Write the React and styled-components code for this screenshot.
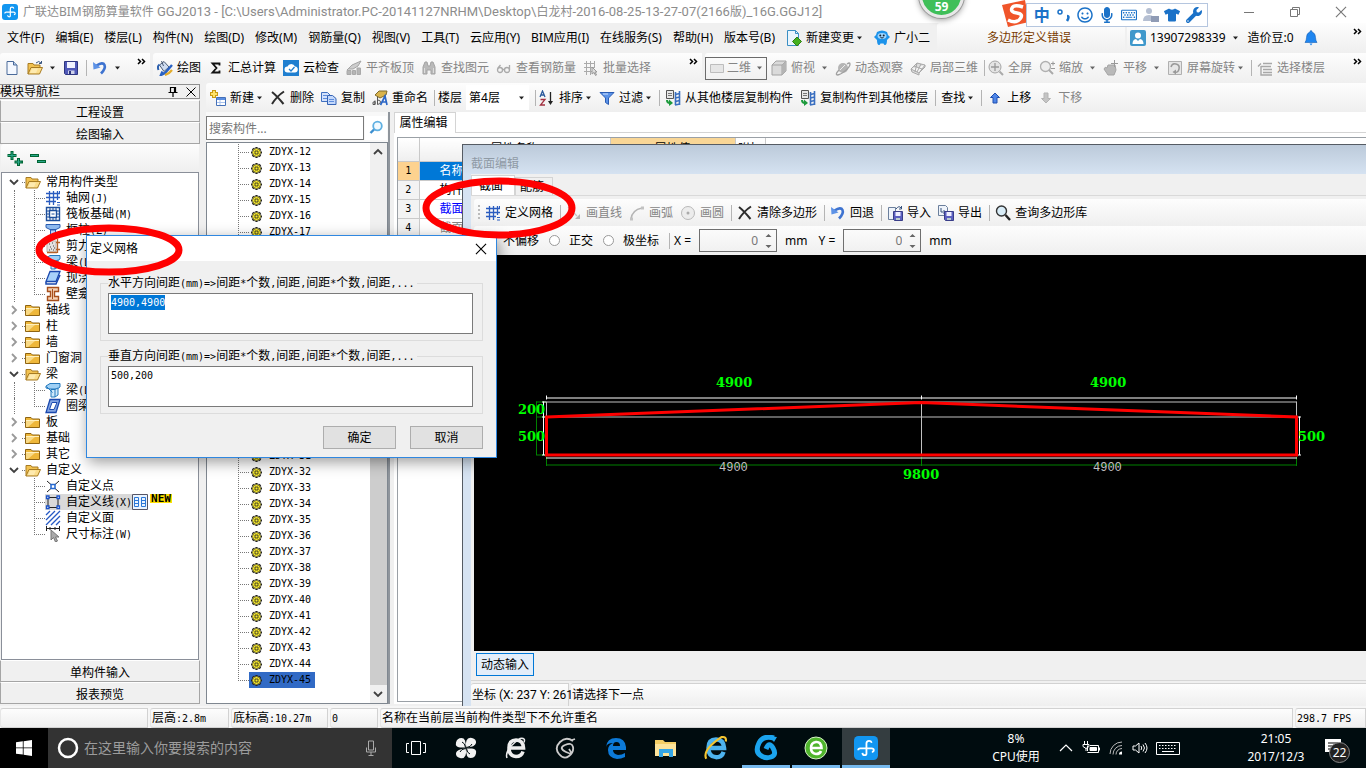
import React, { useEffect, useRef } from 'react';
import styled, { createGlobalStyle, css } from 'styled-components';
import { FaWrench, FaTshirt, FaMicrophone, FaRegKeyboard, FaRegSmile } from 'react-icons/fa';

const ui = '"Noto Sans", "Noto Sans CJK SC", sans-serif';
const mono = '"DejaVu Sans Mono", "Noto Sans CJK SC", monospace';

const GlobalStyle = createGlobalStyle`
  * { box-sizing: border-box; }
  body {
    margin: 0;
    font: 12px/16px ${ui};
    color: #000;
    background: #f0f0f0;
    overflow: hidden;
  }
  button, input, textarea, select { font: inherit; color: inherit; margin: 0; }
  button { padding: 0; border: 0; background: none; }
  a { color: inherit; text-decoration: none; }
  ul { list-style: none; margin: 0; padding: 0; }
  svg { display: block; flex: none; }
`;

/* ---------- icons ---------- */

const I = ({ children, s = 16, ...p }) => (
  <svg width={s} height={s} viewBox="0 0 16 16" fill="none" aria-hidden="true" {...p}>{children}</svg>
);

const Caret = ({ c = '#222' }) => (
  <svg width="7" height="4" viewBox="0 0 7 4" aria-hidden="true"><path d="M1 0.5h5L3.5 3.5z" fill={c} /></svg>
);

const Logo = ({ s = 16 }) => (
  <I s={s}>
    <rect width="16" height="16" rx="3" fill="#1296f0" />
    <path d="M8.300 12.200V5q0-1.800 1.700-1.800t1.600 1.400M8.300 8.200H4.200q-1.400 0-1.400 1.300M5.600 11.200q.2 1.600 1.500 1.600t1.200-1.200M6 8.200h5.700q1.500 0 1.500 1.200t-1.300 1.300" stroke="#fff" strokeWidth="1.200" />
  </I>
);
const NewDoc = () => (
  <I><path d="M3 1.500h6.500L13 5v9.500H3z" fill="#f4f8ff" stroke="#4a6a9a" /><path d="M9.500 1.500V5H13" fill="#b9cdea" stroke="#4a6a9a" /></I>
);
const OpenFolder = ({ arrow }) => (
  <I>
    <path d="M1 14V3.500h5l1 1.500h6v3" fill="#f2c251" stroke="#a77b22" />
    <path d="M1 14l3-6.500h11.500L12.500 14z" fill="#fbdd8b" stroke="#a77b22" />
    <path d="M3 13l2-4.500h6L9 13z" fill="#fff0bf" opacity=".7" />
    {arrow && <path d="M9 3q3-3 5 0M14.500 1v2.500H12" stroke="#36537f" />}
  </I>
);
const Folder = () => (
  <I>
    <path d="M.5 13.500v-10H6L7.500 5h7v8.500z" fill="#eeb73a" stroke="#8f6412" />
    <path d="M1 6.500h13" stroke="#fff0bd" /><path d="M1 7h9L3 13H1z" fill="#fbe29a" opacity=".8" />
  </I>
);
const Save = () => (
  <I><path d="M1.500 1.500h13v13h-12l-1-1z" fill="#5059b8" stroke="#2e3680" /><path d="M4 2h8v6H4z" fill="#f1f3ff" /><path d="M5 10.500h6.500V14H5z" fill="#cfd3ea" /><path d="M6 11h2v3H6z" fill="#2e3680" /></I>
);
const Undo = () => (
  <I><path d="M4.500 5.500q6.500-4 8-.5t-3.500 8.500" stroke="#3e73d0" strokeWidth="2.600" /><path d="M1 2l.5 7.500L8.500 7.500z" fill="#5d92e6" /></I>
);
const Paint = () => (
  <I><path d="M2.500 5L7 1.500l5 5.500-5 4.500z" fill="#cfdcf0" stroke="#4a5a75" /><path d="M2.500 4.500Q0 6 1.500 10" stroke="#2b5fae" strokeWidth="2" /><path d="M4.500 1l2 5" stroke="#4a5a75" /><path d="M15 5L8 13l-4 2 1.500-3.500" stroke="#2a62c4" strokeWidth="2.400" /><path d="M8 15q4-1 7-5" stroke="#e3ac2c" strokeWidth="2.200" /></I>
);
const Sigma = () => (
  <I><path d="M11.500 5.500V3.500h-7L8.500 8l-4 4.500h7v-2" stroke="#111" strokeWidth="1.800" /></I>
);
const Cloud = () => (
  <I><rect width="16" height="16" fill="#1f7fd0" /><path d="M4.500 12.500a3 3 0 0 1 0-6 4 4 0 0 1 7.500 0 3 3 0 0 1-.5 6z" fill="#fff" /><path d="M6 9l2 2 3.500-4" stroke="#1f7fd0" strokeWidth="1.300" /></I>
);
const AlignTop = () => (
  <I><path d="M1 10l5-5 9-4-3 5-5 3H2z" fill="#cdcdcd" stroke="#a5a5a5" /><path d="M1 10.500h4v4H1zM6.500 14.500v-4h3v4zM11 14.500V8h3.500v6.500z" fill="#b5b5b5" stroke="#a9a9a9" /></I>
);
const Binoculars = () => (
  <I><path d="M2 7l2-5h2l1 4h2l1-4h2l2 5v7h-4v-4H6v4H2z" fill="#b9b9b9" stroke="#a3a3a3" /><path d="M3.500 8v5M12.500 8v5" stroke="#ddd" /></I>
);
const Glasses = () => (
  <I><circle cx="4" cy="10" r="2.500" stroke="#aaa" strokeWidth="1.300" /><circle cx="11" cy="10" r="2.500" stroke="#aaa" strokeWidth="1.300" /><path d="M6.500 9.500h2M13.500 10V5M2 8l2.500-3" stroke="#aaa" strokeWidth="1.300" /></I>
);
const Batch = () => (
  <I><path d="M1 3.500h11M1 7.500h10M1 11.500h8M3.500 1v14M7.500 1v14M11.500 1v7" stroke="#aaa" /><path d="M9 7l5 5h-2l1.500 3-1 .5-1.500-3-2 1.500z" fill="#ddd" stroke="#999" /></I>
);
const Flat = () => (
  <I><path d="M1.500 4.500h13v8h-13z" fill="#e6e6e6" stroke="#bdbdbd" /></I>
);
const Cube = () => (
  <I><path d="M1 5h10v10H1zM1 5l4-4h10l-4 4M15 1v10l-4 4" fill="#dadada" stroke="#a2a2a2" /><path d="M11 5l4-4v10l-4 4z" fill="#b4b4b4" /></I>
);
const Orbit = () => (
  <I><circle cx="8" cy="8" r="5" fill="#b5b5b5" /><path d="M12 4q3-2 3 0 0 3-5 7t-8 4q-2-1 2-5" stroke="#a0a0a0" strokeWidth="1.300" /><path d="M5 10l5-5" stroke="#eee" /></I>
);
const Local3d = () => (
  <I><path d="M1 9l6-6 8 2-6 8zM4 6l8 3M7 3l-2 9M11 4l-4 8M1 9l1 3 7 3v-2l6-6V5" stroke="#a8a8a8" fill="#dedede" /></I>
);
const FullScreen = () => (
  <I><circle cx="7" cy="7" r="6" fill="#e4e4e4" stroke="#a6a6a6" /><path d="M7 3v8M3 7h8" stroke="#999" strokeWidth="1.300" /><path d="M11.500 11.500L15 15" stroke="#aaa" strokeWidth="2" /></I>
);
const ZoomIcon = () => (
  <I><circle cx="6.500" cy="6.500" r="5" fill="#eee" stroke="#b0b0b0" strokeWidth="1.300" /><path d="M10 10l4 4" stroke="#aaa" strokeWidth="2" /><path d="M12 3.500h4M14 1.500v4M12 8.500h4" stroke="#999" /></I>
);
const Pan = () => (
  <I><path d="M1 9q1-3 3-1l1-3h7l1 5-2 5H5z" fill="#b9b9b9" stroke="#a5a5a5" /><path d="M11.500 0v7M8 3.500h7" stroke="#999" /></I>
);
const Rotate = () => (
  <I><path d="M1.500 1.500h13v13h-13z" fill="#e6e6e6" stroke="#b0b0b0" /><path d="M4 7q1-4 5-3t3 5-4 3" stroke="#999" strokeWidth="1.500" /><path d="M9 9.500v5L5.500 12z" fill="#999" /></I>
);
const Floors = () => (
  <I><path d="M6 3.500h9M4 6.500h10M6 9.500h9M6 12.500h9M1 6.500l3-3M4 6v9h11" stroke="#a8a8a8" strokeWidth="1.400" /></I>
);
const NewItem = () => (
  <I><path d="M4 0v8M0 4h8" stroke="#c79a13" strokeWidth="4" /><path d="M4 1v6M1 4h6" stroke="#ffe36a" strokeWidth="2" /><path d="M6.500 7.500h9v8h-9z" fill="#fff" stroke="#4470b8" /><path d="M7 8h8v2H7z" fill="#5a8de0" /><path d="M7 12.500h8M10 10v5" stroke="#a9c3ee" /></I>
);
const Cross = () => (
  <I><path d="M2 2q5 4 11.500 12M14 1.500Q7 6 2 14" stroke="#2d2d2d" strokeWidth="2" /></I>
);
const Copy = () => (
  <I><path d="M.5 2.500h6l3 3v6h-9z" fill="#d4e2fc" stroke="#4070c0" /><path d="M6.500 5.500h5l3.500 3v6H6.500z" fill="#c3d8fb" stroke="#3563b5" /><path d="M8 9.500h5M8 11.500h5M2 5.500h4M2 8.500h4" stroke="#5e8ddd" /></I>
);
const Rename = () => (
  <I>
    <path d="M3 5l4-4h8l-1 4-6 3z" fill="#d9b44d" stroke="#7f6a2a" />
    <path d="M1 14.500q-1-3 2-3v3zM3 10.500v4M5.500 7v7.500q3-.5 3-2.500t-3-2" stroke="#555" /><path d="M8.500 15L13 6l2 9M10.500 12h4" stroke="#2c67c6" strokeWidth="1.700" />
  </I>
);
const Sort = () => (
  <I>
    <path d="M1 7l2.500-6L6 7M2 5h3" stroke="#2b5a9c" strokeWidth="1.300" /><path d="M1.500 9.500H6L1.500 15H6" stroke="#a33242" strokeWidth="1.300" />
    <path d="M11.500 2v11" stroke="#222" strokeWidth="1.300" /><path d="M9 11h5l-2.500 4z" fill="#222" />
  </I>
);
const Funnel = () => (
  <I><path d="M1 2.500h14L9.500 8v6.500l-3-2V8z" fill="#5b93e8" stroke="#2a5cb4" /><path d="M4 4h5" stroke="#cfe1ff" /></I>
);
const FloorCopy = () => (
  <I>
    <path d="M1.500.5h7v8h-7z" fill="#e8e8e8" stroke="#555" /><path d="M3 3.500h4M3 5.500h4" stroke="#777" />
    <path d="M10.500 2v13M14.500 1v14" stroke="#3a6fc0" strokeWidth="1.600" /><path d="M10 4.500l5-1M10 8l5-1M10 11.500l5-1M10 15l5-1" stroke="#3a6fc0" strokeWidth="1.400" />
    <path d="M2 10q0 3 3 3" stroke="#1d9a3c" strokeWidth="2" /><path d="M4 9.500l4 3.500-4 3z" fill="#1d9a3c" />
  </I>
);
const ArrowIcon = ({ down, off }) => (
  <I>
    <path d={down ? 'M8 13L3.500 8.500H6V3h4v5.500h2.500z' : 'M8 3l4.500 4.500H10V13H6V7.500H3.500z'} fill={off ? '#c4c4c4' : '#4f86e8'} stroke={off ? '#b3b3b3' : '#1f4fb0'} />
  </I>
);
const DocPlus = () => (
  <I><path d="M1.500.5h8l3 3v12h-11z" fill="#eaf5fd" stroke="#3a8fc4" /><path d="M9.500.5v3h3" stroke="#3a8fc4" /><path d="M11 7l4.500 4.500L11 16l-4.500-4.500z" fill="#44b01f" stroke="#2f7d13" /></I>
);
const Mascot = () => (
  <I>
    <path d="M3 2q5-3 10 0l1 3 2 2-2 2-1 1q0 5-2 5-1 0-1.500-1.500h-3Q6 15 5 15q-2 0-2-5L2 9 0 7l2-2z" fill="#1d93ea" /><ellipse cx="8" cy="6" rx="4.500" ry="3" fill="#9fd6ff" />
    <circle cx="6.300" cy="5.500" r="1" fill="#123" /><circle cx="9.700" cy="5.500" r="1" fill="#123" /><path d="M6.500 7.500q1.500 1 3 0" stroke="#123" />
  </I>
);
const User = () => (
  <I><rect width="16" height="16" rx="2" fill="#3f98cb" /><circle cx="8" cy="5.500" r="3" fill="#fff" /><path d="M2.500 14q0-4.500 3.500-5l2 2 2-2q3.500.5 3.500 5z" fill="#fff" /></I>
);
const Bell = () => (
  <I><path d="M8 .500q1 0 1 1.500 3.500 1 3.500 5.500 0 3 1.500 5H2q1.500-2 1.500-5Q3.500 3 7 2 7 .500 8 .500z" fill="#1f86f0" stroke="#155fb5" strokeWidth=".6" /><path d="M6.500 13.500h3L8 15.500z" fill="#1f86f0" /></I>
);
const Grid = () => (
  <I><path d="M1 3.500h14M1 7.500h14M1 11.500h10M4.500 1v14M8.500 1v14M12.500 1v9" stroke="#2a5cc0" strokeWidth="1.300" /><path d="M12 12.500h3M12 15h3M14.500 1v3" stroke="#2a5cc0" /></I>
);
const Raft = () => (
  <I><path d="M1.500 1.500h13v13h-13zM4.500 4.500h7v7h-7z" stroke="#1d4f9c" strokeWidth="1.400" /><path d="M1 5h3M1 8h3M1 11h3M12 5h3M12 8h3M12 11h3M5 1v3M8 1v3M11 1v3M5 12v3M8 12v3M11 12v3M6.500 8h3" stroke="#1d4f9c" /></I>
);
const Column = () => (
  <I><path d="M1 2.500h14v3l-4 2H5l-4-2z" fill="#8db9ee" stroke="#2a5cb0" /><path d="M5.500 8h5v7h-5z" fill="#bcd8fa" stroke="#2a5cb0" /></I>
);
const ShearWall = () => (
  <I><path d="M2 3h9v11H2z" fill="#e4e2e0" stroke="#bdb4ac" /><path d="M4 6h1M7 5h1M5 9h1M8 8h1M4 12h1M8 12h1M6 11h1M9 10h1" stroke="#444" /><path d="M2 14.500h10M12.500 1v14M11 4.500h4M11 11.500h4" stroke="#b5622a" strokeWidth="1.300" /></I>
);
const Beam = () => (
  <I><path d="M1 4l4-2.500h10V5l-3 2H5L1 6z" fill="#9fd0f5" stroke="#2378bd" /><path d="M6 7.500h4V15H6zM10 7.500l3-1.500v7l-3 2M1.500 4.500l6 6" fill="#cfe9fb" stroke="#2378bd" /></I>
);
const Slab = () => (
  <I><path d="M5 1.500h10l-4 10H1z" fill="#a8d2fa" stroke="#1b49ae" strokeWidth="1.300" /><path d="M1 12v2h10l4-9" stroke="#1b49ae" strokeWidth="1.500" /></I>
);
const RingBeam = () => (
  <I><path d="M5 1.500h10l-4 13H1z" fill="#84a6e2" stroke="#1b49ae" strokeWidth="1.300" /><path d="M7 4.500h5l-3 7H4.500z" fill="#fff" stroke="#1b49ae" /></I>
);
const Niche = () => (
  <I><path d="M2.500 1.500h11v4H9.500v5h4v4h-11v-4h3v-5h-3z" stroke="#a8501c" strokeWidth="1.400" fill="#f6d3b6" /><path d="M7.500 3v10" stroke="#a8501c" /></I>
);
const PointIcon = () => (
  <I><path d="M2 3l4.500 4M14 3L9.500 7M2 14l4.500-4M14 14l-4.500-4" stroke="#222" /><path d="M6 6.500h4v4H6z" fill="#fff" stroke="#2468d0" strokeWidth="1.500" /></I>
);
const LineIcon = () => (
  <I><path d="M3 3.500h10v10H3z" stroke="#222" /><path d="M1.500 2h2.500v2.500H1.500zM12 2h2.500v2.500H12zM1.500 12h2.500v2.500H1.500zM12 12h2.500v2.500H12z" fill="#fff" stroke="#1c53c8" strokeWidth="1.300" /></I>
);
const HatchIcon = () => (
  <I><path d="M1 5l4-4M1 10l9-9M1 15L15 1M6 15l9-9M11 15l4-4" stroke="#2458c4" strokeWidth="1.300" /></I>
);
const DimIcon = () => (
  <I><path d="M1.500 0v5M14.500 0v5M1 2.500h14M5 1v3M10 1v3" stroke="#222" /><path d="M6 4v10l2.500-2.500L10.500 16l2-1-2-4H14z" fill="#aaa" stroke="#777" /></I>
);
const TableIcon = () => (
  <I><path d="M.5.5h15v15H.5z" fill="#eaf4ff" stroke="#556" /><path d="M2.500 3.500h4v9h-4zM9.500 3.500h4v9h-4zM3 6.500h3.500M3 9.500h3.500M10 6.500h3.500M10 9.500h3.500" stroke="#2b78d8" /></I>
);
const Gear = () => (
  <svg width="11" height="11" viewBox="0 0 11 11" aria-hidden="true">
    <path d="M5.500 0v11M0 5.500h11M1.600 1.600l7.800 7.800M9.400 1.600L1.600 9.400" stroke="#222" strokeWidth="2.200" />
    <circle cx="5.500" cy="5.500" r="4" fill="#f7e92b" />
    <path d="M3.800.8v2M7.200.8v2M3.800 8.200v2M7.200 8.200v2M.8 3.800h2M.8 7.200h2M8.200 3.800h2M8.200 7.200h2" stroke="#222" strokeWidth=".8" />
    <path d="M4 4h3v3H4z" fill="none" stroke="#222" strokeWidth=".8" />
  </svg>
);
const Magnifier = ({ dark }) => (
  dark
    ? <I><circle cx="6.500" cy="6" r="5" fill="#d9edf8" stroke="#333" strokeWidth="1.400" /><path d="M10.500 10l4.500 5" stroke="#222" strokeWidth="2.400" /></I>
    : <I><circle cx="9.500" cy="6" r="4.300" fill="#f2faff" stroke="#5fb0e2" strokeWidth="1.800" /><path d="M6 9.500L2.500 13" stroke="#3c8fd0" strokeWidth="2.400" /></I>
);
const LineDraw = () => <I><path d="M2 2l9 9" stroke="#c4c4c4" strokeWidth="1.300" /><path d="M14 9v5H9z" fill="#b5b5b5" /></I>;
const ArcDraw = () => <I><path d="M2 14Q3 5 13 3" stroke="#b5b5b5" strokeWidth="1.400" /><path d="M1 12.500h3v3H1zM12 1.500h3v3h-3z" fill="#c2c2c2" /></I>;
const CircleDraw = () => <I><circle cx="8" cy="8" r="6.500" fill="#ececec" stroke="#b9b9b9" /><circle cx="8" cy="8" r="1.500" fill="#aaa" /></I>;
const Transfer = ({ out }) => (
  <I>
    <path d={out ? 'M.5.500h7l2 2v8h-9z' : 'M1.500 2.500h7v12h-7z'} fill="#eef3fa" stroke="#6b7f9c" />
    {out ? <path d="M3 3v4h4M5.500 5L7.500 7l-2 2" stroke="#36537f" /> : <path d="M9 4q3-4 5-1M14.500 1v3H12" stroke="#36537f" />}
    <path d="M6.500 6.500h9v9h-8l-1-1z" fill="#5b5fc0" stroke="#393d88" /><path d="M8.500 7h5v4h-5z" fill="#eef" /><path d="M9 13h4v2H9z" fill="#bcc" />
  </I>
);
const Pin = () => <I><path d="M5.500 3.500h5v5h-5zM3.500 8.500h9M8 9v4M9.500 4v4" stroke="#000" strokeWidth="1.200" /></I>;
const ThinX = ({ s = 16, c = '#000' }) => <I s={s}><path d="M3.500 3.500l9 9M12.500 3.500l-9 9" stroke={c} /></I>;
const ExpandAll = () => (
  <I><path d="M5 0v9M.5 4.500h9" stroke="#063" strokeWidth="3" /><path d="M5 1v7M1 4.500h8" stroke="#2aa78c" /><path d="M11.500 7v8M7.500 11h8.500" stroke="#063" strokeWidth="3" /><path d="M11.500 8v6M8.500 11h6" stroke="#2aa78c" /></I>
);
const CollapseAll = () => (
  <I><path d="M0 4.500h9M7 10.500h9" stroke="#063" strokeWidth="3" /><path d="M1 4.500h7M8 10.500h7" stroke="#2aa78c" /></I>
);
const Chevron = ({ dir }) => {
  const d = { right: 'M6 4l4 4-4 4', down: 'M4 6l4 4 4-4', up: 'M4 10l4-4 4 4' }[dir];
  return <I><path d={d} stroke={dir === 'right' ? '#999' : '#404040'} strokeWidth="1.800" /></I>;
};
const More = () => (
  <svg width="9" height="8" viewBox="0 0 9 8" aria-hidden="true"><path d="M1 1l2.500 2.500L1 6M5 1l2.500 2.500L5 6" fill="none" stroke="#000" strokeWidth="1.500" /></svg>
);

/* ---------- shared parts ---------- */

const Half = styled.span`
  font: 10px/16px ${mono};
`;

// half-width latin inside full-width chinese text
const Sim = ({ children }) => children.split(/([ -~]+)/).filter(Boolean).map((t, i) => (
  /[ -~]/.test(t) ? <Half key={i}>{t}</Half> : <React.Fragment key={i}>{t}</React.Fragment>
));

const Page = styled.div`
  position: relative;
  display: flex;
  flex-direction: column;
  height: 100vh;
  min-width: 1200px;
  overflow: hidden;
  white-space: nowrap;
`;

const strip = css`
  background: linear-gradient(#fdfdfd, #efefef);
  border-radius: 3px 0 0 3px;
`;

const ToolButton = styled.button`
  display: flex;
  align-items: center;
  gap: 4px;
  height: 24px;
  color: ${(p) => (p.$off ? '#858585' : '#000')};
`;

const CaretSlot = styled.span`
  display: flex;
  margin-left: ${(p) => (p.$wide ? 2 : -2)}px;
`;

const Sep = styled.span`
  width: 1px;
  height: 16px;
  margin: ${(p) => (p.$tight ? '0 -4px 0 -1px' : '0 -2px 0 0')};
  background: #b4b4b4;
`;

const Tool = ({ icon, label, off, drop, wide }) => (
  <ToolButton type="button" $off={off} aria-label={label ? undefined : 'tool'}>
    {icon}
    {label}
    {drop && <CaretSlot $wide={wide}><Caret c={off ? '#666' : '#222'} /></CaretSlot>}
  </ToolButton>
);

/* ---------- title bar ---------- */

const TitleBar = styled.header`
  display: flex;
  align-items: center;
  height: 23px;
  padding: 0 16px 0 2px;
  background: #fff;
  color: #8c8c8c;
  h1 { flex: 1; margin: 0 0 0 5px; font: inherit; }
  h1 span { font: 13px/16px Roboto, sans-serif; }
`;

const WinButtons = styled.div`
  display: flex;
  gap: 28px;
  button { width: 18px; height: 18px; display: grid; place-items: center; }
`;

const ImeBar = styled.div`
  position: absolute;
  top: 0;
  right: 158px;
  width: 207px;
  height: 28px;
  display: flex;
  align-items: center;
`;

const ImeIcons = styled.div`
  display: flex;
  align-items: center;
  justify-content: space-around;
  flex: 1;
  height: 24px;
  margin: 2px 0 0 -4px;
  padding: 0 2px 0 4px;
  border: 1px solid #b5c6df;
  background: #fff;
  color: #1b72c8;
  font-size: 16px;
  font-weight: 700;
`;

const Ball = styled.div`
  position: absolute;
  top: -27px;
  left: calc(50% + 236px);
  width: 45px;
  height: 45px;
  padding-top: 23px;
  border: 3px solid #e8e8e8;
  border-radius: 50%;
  background: #3fbf59;
  box-shadow: 0 0 0 1px #9a9a9a, 0 2px 6px rgba(0, 0, 0, 0.4);
  color: #fff;
  font-weight: 700;
  text-align: center;
`;

/* ---------- menu bar ---------- */

const MenuBar = styled.div`
  display: flex;
  flex: none;
  gap: 2px;
  height: 30px;
`;

const Menus = styled.nav`
  display: flex;
  align-items: center;
  gap: 11px;
  flex: 0 0 935px;
  padding-left: 7px;
`;

const Notice = styled.div`
  flex: 0 0 188px;
  display: grid;
  place-items: center;
  padding-right: 4px;
  color: #7a3c00;
  ${strip}
`;

const Account = styled.div`
  flex: 1;
  display: flex;
  align-items: center;
  gap: 9px;
  padding-left: 3px;
  ${strip}
  > :last-child { margin: -12px 4px 0 auto; }
`;

/* ---------- toolbars ---------- */

const Toolbars = styled.div`
  display: flex;
  flex: none;
  gap: 3px;
  height: 30px;
`;

const Segment = styled.div`
  display: flex;
  align-items: center;
  gap: 7px;
  flex: ${(p) => (p.$w ? `0 0 ${p.$w}px` : '1')};
  min-width: 0;
  padding: 0 4px;
  ${strip}
`;

const Push = styled.span`
  margin: -12px 0 0 auto;
`;

const ViewSelect = styled.label`
  display: flex;
  align-items: center;
  width: 62px;
  height: 23px;
  margin: 0 -3px 0 -4px;
  padding: 0 3px;
  border: 1px solid #6b6b6b;
  color: #858585;
  select { flex: 1; min-width: 0; margin-left: 2px; padding: 0; border: 0; background: none; appearance: none; }
`;

/* ---------- body ---------- */

const Body = styled.div`
  display: flex;
  flex: 1;
  min-height: 0;
`;

const NavPanel = styled.aside`
  display: flex;
  flex-direction: column;
  flex: 0 0 200px;
  padding-bottom: 2px;
`;

const NavTitle = styled.div`
  display: flex;
  align-items: center;
  gap: 2px;
  height: 15px;
  margin: 1px 0;
  border: 1px solid #8f8f8f;
  border-left: 0;
  h2 { flex: 1; margin: 0; font: inherit; }
`;

const NavButton = styled.button`
  height: 22px;
  flex: none;
  padding-top: 3px;
  border: 1px solid #a5a5a5;
  border-top-color: #fff;
  background: #f0f0f0;
`;

const NavTools = styled.div`
  display: flex;
  align-items: center;
  gap: 7px;
  height: 28px;
  margin: 0 1px;
  padding: 2px 6px 0;
  ${strip}
`;

const Tree = styled.ul`
  flex: 1;
  min-height: 0;
  margin: 0 1px;
  padding-top: 1px;
  overflow: hidden;
  border: 1px solid #8a8f99;
  background: #fff;
`;

const GroupRow = styled.div`
  display: flex;
  align-items: center;
  height: 16px;
  padding-left: 4px;
  button { width: 16px; height: 16px; }
  > span { margin-left: 5px; }
`;

const Dots = styled.i`
  width: 3px;
  height: 1px;
  border-top: 1px dotted #777;
`;

const Leaf = styled.li`
  display: flex;
  align-items: center;
  height: 16px;
  padding-left: 12px;
`;

const Rail = styled.i`
  width: 20px;
  height: 16px;
  border-left: 1px dotted ${(p) => (p.$on ? '#777' : 'transparent')};
`;

const Elbow = styled.i`
  flex: none;
  display: flex;
  width: 11px;
  height: 16px;
  background:
    repeating-linear-gradient(#777 0 1px, transparent 1px 2px) 0 0 / 1px ${(p) => (p.$last ? '8px' : '100%')} no-repeat,
    repeating-linear-gradient(90deg, #777 0 1px, transparent 1px 2px) 0 8px / 100% 1px no-repeat;
`;

const LeafLabel = styled.a`
  display: flex;
  align-items: center;
  height: 16px;
  > span { margin-left: 5px; }
  background: ${(p) => (p.$on ? '#d9d9d9' : 'none')};
`;

const NewTag = styled.b`
  align-self: flex-start;
  margin-left: 2px;
  padding: 0 1px;
  background: #ffe100;
  font: 700 11px/9px ${mono};
`;

/* ---------- work area ---------- */

const Work = styled.main`
  display: flex;
  flex-direction: column;
  flex: 1;
  min-width: 0;
  margin-left: 6px;
`;

const WorkTools = styled.div`
  display: flex;
  align-items: center;
  gap: 7px;
  flex: none;
  height: 29px;
  padding-left: 4px;
  ${strip}
`;

const FloorSelect = styled.label`
  display: flex;
  align-items: center;
  gap: 4px;
  span { display: flex; align-items: center; width: 63px; height: 25px; padding: 0 4px 0 3px; background: #fff; }
  select { flex: 1; min-width: 0; padding: 0; border: 0; background: none; appearance: none; }
`;

const Panes = styled.div`
  display: flex;
  flex: 1;
  gap: 4px;
  min-height: 0;
  padding-bottom: 2px;
`;

const ListPane = styled.section`
  display: flex;
  flex-direction: column;
  flex: 0 0 184px;
  padding-top: 4px;
  border-right: 2px solid #8f959c;
  background: #f8f8f8;
`;

const Search = styled.div`
  display: flex;
  gap: 1px;
  height: 25px;
  margin-bottom: 1px;
  input {
    width: 158px;
    height: 24px;
    padding: 0 2px;
    border: 1px solid #7a7a7a;
    border-radius: 0;
    background: #fff;
  }
  input::placeholder { color: #777; opacity: 1; }
  button { width: 22px; height: 24px; display: grid; place-items: center; background: #fff; }
`;

const ListBox = styled.div`
  display: flex;
  flex: 1;
  min-height: 0;
  border: 1px solid #7f8790;
  background: #fff;
  overflow: hidden;
  ul { flex: 1; padding: 1px 0 0 31px; }
`;

const ItemRow = styled.li`
  display: flex;
  align-items: center;
  height: 16px;
  a {
    display: flex;
    align-items: center;
    gap: 7px;
    height: 16px;
    padding: 0 4px 0 2px;
    font: 10px/16px ${mono};
    background: ${(p) => (p.$on ? '#316ac5' : 'none')};
  }
`;

const ScrollBar = styled.div`
  display: flex;
  flex-direction: column;
  width: 17px;
  background: #f0f0f0;
  button { height: 18px; flex: none; }
`;

const Thumb = styled.div`
  flex: 1;
  margin-top: 236px;
  background: #cdcdcd;
`;

const PropPane = styled.section`
  display: flex;
  flex-direction: column;
  flex: 1;
  min-width: 0;
  background: #fff;
`;

const PropTab = styled.div`
  display: flex;
  height: 21px;
  button { width: 62px; padding-right: 3px; border: 1px solid #d4d4d4; border-bottom: 0; background: #fff; }
  &::after { content: ''; flex: 1; border-bottom: 1px solid #d4d4d4; }
`;

const PropBox = styled.div`
  flex: 1;
  margin: 4px 0 2px 3px;
  border: 1px solid #9aa0a6;
  border-right: 0;
`;

const PropTable = styled.table`
  border-collapse: collapse;
  table-layout: fixed;
  width: 367px;
  th, td { height: 19px; padding: 0; border: 1px solid #c9c9c9; border-width: 0 1px 1px 0; font-weight: 400; overflow: hidden; }
  thead th { height: 23px; background: linear-gradient(#fff, #efefef); }
  tbody th { background: #f3f3f3; font: 10px/16px ${mono}; }
  td:nth-child(2) { padding-left: 20px; }
`;

const HotHead = styled.th`
  && { background: #f9d696; }
`;

const PropRow = styled.tr`
  color: ${(p) => p.$color};
  td { background: ${(p) => p.$bg || '#fff'}; }
  && th { color: #000; background: ${(p) => (p.$bg ? '#fdd28f' : '#f3f3f3')}; }
`;

/* ---------- section editor window ---------- */

const EditorWindow = styled.section`
  position: absolute;
  top: 144px;
  right: 0;
  bottom: 62px;
  left: 462px;
  display: flex;
  flex-direction: column;
  border: 1px solid #555b63;
  border-width: 1px 0 0 1px;
  padding-left: 8px;
  background: linear-gradient(#bccada, #d6e3f2 30px);
`;

const EditorTitle = styled.h2`
  flex: 0 0 29px;
  margin: 0;
  padding-top: 11px;
  font: inherit;
  color: #8f9aa5;
`;

const EditorBody = styled.div`
  display: flex;
  flex: 1;
  flex-direction: column;
  min-height: 0;
  background: #f0f0f0;
`;

const EditorTabs = styled.div`
  display: flex;
  align-items: flex-end;
  height: 22px;
  margin-bottom: 3px;
  border-bottom: 1px solid #d9d9d9;
`;

const EditorTab = styled.button`
  width: ${(p) => (p.$on ? 44 : 38)}px;
  height: ${(p) => (p.$on ? 20 : 18)}px;
  padding-right: 4px;
  border: 1px solid #d4d4d4;
  border-bottom: 0;
  background: ${(p) => (p.$on ? '#fff' : '#f0f0f0')};
`;

const EditorTools = styled.div`
  display: flex;
  align-items: center;
  gap: 7px;
  flex: 0 0 27px;
  margin-left: 3px;
  padding-left: 4px;
  ${strip}
`;

const Grip = styled.i`
  width: 2px;
  height: 15px;
  margin-right: -2px;
  background: repeating-linear-gradient(#bbb 0 2px, transparent 2px 4px);
`;

const Options = styled.div`
  display: flex;
  align-items: center;
  flex: 0 0 29px;
  margin-left: 3px;
  padding-left: 9px;
  ${strip}
`;

const Radio = styled.label`
  display: flex;
  align-items: center;
  gap: 9px;
  margin-right: 10px;
  input {
    appearance: none;
    width: 11px;
    height: 11px;
    margin: 0;
    border: 1px solid #999;
    border-radius: 50%;
    background: #fff;
  }
`;

const NumberField = styled.label`
  display: flex;
  align-items: center;
  gap: 8px;
  margin-left: ${(p) => (p.$first ? 6 : 11)}px;
`;

const Spin = styled.span`
  display: flex;
  width: 78px;
  height: 23px;
  border: 1px solid #6f6f6f;
  color: #777;
  input { flex: 1; min-width: 0; padding: 0 3px; border: 0; background: none; text-align: right; }
  svg { margin: 3px 4px; }
`;

const Canvas = styled.div`
  flex: 1;
  min-height: 0;
  margin-left: 3px;
  background: #000;
  svg { width: 100%; height: 100%; }
`;

const InputRow = styled.div`
  flex: 0 0 30px;
  padding: 2px 0 0 5px;
  border-bottom: 1px solid #d6d6d6;
  button { width: 58px; height: 23px; border: 1px solid #0078d7; background: #e3eefa; }
`;

const EditorStatus = styled.div`
  display: flex;
  flex: 0 0 24px;
  padding-top: 2px;
  gap: 2px;
  font-family: Roboto, "Noto Sans CJK SC", sans-serif;
  span { padding: 3px 1px; border-top: 1px solid #d2d2d2; ${strip} }
  span:first-child { width: 98px; border-right: 1px solid #d2d2d2; }
  span:last-child { flex: 1; }
`;

/* ---------- dialog ---------- */

const Dialog = styled.form`
  position: absolute;
  top: 235px;
  left: 86px;
  width: 411px;
  height: 223px;
  border: 1px solid #2f87e0;
  background: #f0f0f0;
  box-shadow: 2px 4px 14px rgba(0, 0, 0, 0.4);
`;

const DialogTitle = styled.div`
  display: flex;
  align-items: center;
  justify-content: space-between;
  height: 25px;
  margin-bottom: 14px;
  padding: 0 6px 0 3px;
  background: #fff;
  h2 { margin: 0; font: inherit; }
`;

const Group = styled.fieldset`
  height: 66px;
  margin: 0 13px 7px;
  padding: 2px 8px 0 7px;
  border: 1px solid #dcdcdc;
  legend { padding: 0 3px 0 0; height: 16px; }
  textarea {
    display: block;
    width: 365px;
    height: 41px;
    padding: 1px 2px;
    border: 1px solid #7a7a7a;
    border-radius: 0;
    outline: 0;
    resize: none;
    font: 10px/15px ${mono};
  }
  textarea::selection { background: #0078d7; color: #fff; }
`;

const DialogButtons = styled.div`
  display: flex;
  justify-content: flex-end;
  gap: 14px;
  padding: 5px 13px 0 0;
  button { width: 73px; height: 23px; border: 1px solid #adadad; background: #e1e1e1; }
`;

const Marks = styled.svg`
  position: absolute;
  top: 0;
  left: 0;
  pointer-events: none;
`;

/* ---------- status bar and task bar ---------- */

const StatusBar = styled.footer`
  display: flex;
  flex: none;
  gap: 2px;
  height: 22px;
  padding-top: 2px;
  background: #f6f6f6;
`;

const StatusCell = styled.span`
  flex: ${(p) => (p.$w ? `0 0 ${p.$w}px` : '1')};
  padding: 1px 0 0 1px;
  border: 1px solid #d2d2d2;
  border-left-color: #e6e6e6;
  ${strip}
`;

const TaskBar = styled.footer`
  display: flex;
  align-items: stretch;
  flex: none;
  height: 40px;
  background: #000c0f;
  color: #fff;
`;

const Start = styled.button`
  display: grid;
  place-items: center;
  width: 48px;
  background: #000;
`;

const TaskSearch = styled.label`
  display: flex;
  align-items: center;
  gap: 5px;
  width: 344px;
  padding: 0 13px 0 9px;
  background: #333;
  input { flex: 1; min-width: 0; padding: 0; border: 0; background: none; font-size: 14px; }
  input::placeholder { color: #9c9c9c; opacity: 1; }
`;

const Apps = styled.div`
  display: flex;
  flex: 1;
  gap: 2px;
`;

const AppButton = styled.button`
  display: grid;
  place-items: center;
  width: 48px;
  border-bottom: 3px solid ${(p) => (p.$run ? '#76b9ed' : 'transparent')};
  padding-top: 3px;
  background: ${(p) => (p.$on ? '#343d40' : 'none')};
  background-clip: padding-box;
`;

const TwoLine = styled.div`
  display: flex;
  flex-direction: column;
  justify-content: center;
  width: ${(p) => p.$w}px;
  text-align: center;
  line-height: 18px;
`;

const Tray = styled.div`
  display: flex;
  align-items: center;
  gap: 8px;
  width: 173px;
`;

const Action = styled.button`
  position: relative;
  display: flex;
  align-items: center;
  width: 45px;
  padding-left: 4px;
  color: #fff;
  span {
    position: absolute;
    right: 16px;
    bottom: 5px;
    width: 21px;
    height: 21px;
    border: 1px solid #888;
    border-radius: 50%;
    background: #222;
    line-height: 19px;
  }
`;

/* ---------- data ---------- */

const menus = ['文件(F)', '编辑(E)', '楼层(L)', '构件(N)', '绘图(D)', '修改(M)', '钢筋量(Q)', '视图(V)', '工具(T)', '云应用(Y)', 'BIM应用(I)', '在线服务(S)', '帮助(H)', '版本号(B)'];

const tree = [
  { name: '常用构件类型', kids: [
    ['轴网(J)', <Grid />], ['筏板基础(M)', <Raft />], ['框柱(Z)', <Column />], ['剪力墙(Q)', <ShearWall />],
    ['梁(L)', <Beam />], ['现浇板(B)', <Slab />], ['壁龛', <Niche />],
  ] },
  { name: '轴线' }, { name: '柱' }, { name: '墙' }, { name: '门窗洞' },
  { name: '梁', kids: [['梁(L)', <Beam />], ['圈梁(E)', <RingBeam />]] },
  { name: '板' }, { name: '基础' }, { name: '其它' },
  { name: '自定义', kids: [['自定义点', <PointIcon />], ['自定义线(X)', <LineIcon />, true], ['自定义面', <HatchIcon />], ['尺寸标注(W)', <DimIcon />]] },
];

const items = Array.from({ length: 34 }, (_, i) => `ZDYX-${i + 12}`);

const props = [
  ['名称', '#fff', '#0078d7'],
  ['构件类型', '#000'],
  ['截面形状', '#00f'],
  ['截面宽度', '#858585'],
];

/* ---------- views ---------- */

const ModuleNav = () => (
  <NavPanel>
    <NavTitle><h2>模块导航栏</h2><Pin /><ThinX /></NavTitle>
    <NavButton type="button">工程设置</NavButton>
    <NavButton type="button">绘图输入</NavButton>
    <NavTools><ExpandAll /><CollapseAll /></NavTools>
    <Tree>
      {tree.map((g, gi) => (
        <li key={gi}>
          <GroupRow>
            <button type="button" aria-label={g.name}><Chevron dir={g.kids ? 'down' : 'right'} /></button>
            <Dots />
            {g.kids ? <OpenFolder /> : <Folder />}
            <span>{g.name}</span>
          </GroupRow>
          {g.kids && (
            <ul>
              {g.kids.map(([name, icon, on], i) => (
                <Leaf key={name}>
                  <Rail $on={gi < tree.length - 1} />
                  <Elbow $last={i === g.kids.length - 1} />
                  <LeafLabel href="#" $on={on}>{icon}<span><Sim>{name}</Sim></span></LeafLabel>
                  {on && <><TableIcon /><NewTag>NEW</NewTag></>}
                </Leaf>
              ))}
            </ul>
          )}
        </li>
      ))}
    </Tree>
    <NavButton type="button">单构件输入</NavButton>
    <NavButton type="button">报表预览</NavButton>
  </NavPanel>
);

const ComponentList = () => (
  <ListPane>
    <Search>
      <input aria-label="搜索构件" placeholder="搜索构件..." />
      <button type="button" aria-label="搜索"><Magnifier /></button>
    </Search>
    <ListBox>
      <ul>
        {items.map((name, i) => (
          <ItemRow key={name} $on={i === items.length - 1}>
            <Elbow $last={i === items.length - 1} />
            <a href="#"><Gear />{name}</a>
          </ItemRow>
        ))}
      </ul>
      <ScrollBar>
        <button type="button" aria-label="上"><Chevron dir="up" /></button>
        <Thumb />
        <button type="button" aria-label="下"><Chevron dir="down" /></button>
      </ScrollBar>
    </ListBox>
  </ListPane>
);

const Properties = () => (
  <PropPane>
    <PropTab><button type="button">属性编辑</button></PropTab>
    <PropBox>
      <PropTable>
        <colgroup><col width="21" /><col width="191" /><col width="125" /><col width="30" /></colgroup>
        <thead><tr><th /><th>属性名称</th><HotHead>属性值</HotHead><th>附加</th></tr></thead>
        <tbody>
          {props.map(([name, color, bg], i) => (
            <PropRow key={name} $color={color} $bg={bg}><th>{i + 1}</th><td>{name}</td><td /><td /></PropRow>
          ))}
        </tbody>
      </PropTable>
    </PropBox>
  </PropPane>
);

const Drawing = () => (
  <svg viewBox="474 255 892 397" preserveAspectRatio="xMidYMid slice" fill="none">
    <g stroke="#c0c0c0">
      <path d="M546.500 402.500H1296.500M546.500 417.500H1296.500M546.500 402V456M1296.500 402V456M921.500 402V456" />
    </g>
    <path d="M536.500 402V455.500M536 402.500h10M536 417.500h10M536 455.500h10M546.500 457v9.500M546 465.500H1297M921.500 457v9.500M1296.500 457v9.500" stroke="#008000" />
    <path d="M546 398.500H1297M546.500 396v4M921.500 396v4M1296.500 396v4M546 458.500H1297M543.500 402V455.500M542 402.500h4M542 417.500h4M542 455.500h4M1299.500 417V455.500M1297 417.500h4M1297 455.500h4" stroke="#fff" />
    <g fill="#00ff00" fontFamily="DejaVu Serif, serif" fontWeight="700" fontSize="13">
      <text x="716" y="387">4900</text>
      <text x="1090" y="387">4900</text>
      <text x="518" y="414">200</text>
      <text x="518" y="441">500</text>
      <text x="1298" y="441">500</text>
      <text x="903" y="479">9800</text>
    </g>
    <g fill="#c0c0c0" fontFamily="Liberation Mono, monospace" fontSize="12">
      <text x="719" y="471">4900</text>
      <text x="1093" y="471">4900</text>
    </g>
    <path d="M546.500 417.500L921 403L1296.500 417.500V455.500H546.500Z" stroke="#f00" strokeWidth="3" />
  </svg>
);

const SpinBox = ({ name, first }) => (
  <NumberField $first={first}>
    {name} =
    <Spin>
      <input defaultValue="0" inputMode="numeric" />
      <svg width="7" height="16" viewBox="0 0 7 16"><path d="M.500 4h6l-3-3zM.500 12h6l-3 3z" fill="#666" /></svg>
    </Spin>
    mm
  </NumberField>
);

const SectionEditor = () => (
  <EditorWindow>
    <EditorTitle>截面编辑</EditorTitle>
    <EditorBody>
      <EditorTabs><EditorTab type="button" $on>截面</EditorTab><EditorTab type="button">配筋</EditorTab></EditorTabs>
      <EditorTools>
        <Grip />
        <Tool icon={<Grid />} label="定义网格" /><Sep />
        <Tool icon={<LineDraw />} label="画直线" off />
        <Tool icon={<ArcDraw />} label="画弧" off />
        <Tool icon={<CircleDraw />} label="画圆" off /><Sep />
        <Tool icon={<Cross />} label="清除多边形" /><Sep />
        <Tool icon={<Undo />} label="回退" /><Sep />
        <Tool icon={<Transfer />} label="导入" />
        <Tool icon={<Transfer out />} label="导出" /><Sep />
        <Tool icon={<Magnifier dark />} label="查询多边形库" />
      </EditorTools>
      <Options>
        {['不偏移', '正交', '极坐标'].map((t) => (
          <Radio key={t}><input type="radio" name="offset" />{t}</Radio>
        ))}
        <Sep />
        <SpinBox name="X" first />
        <SpinBox name="Y" />
      </Options>
      <Canvas><Drawing /></Canvas>
      <InputRow><button type="button">动态输入</button></InputRow>
      <EditorStatus><span>坐标 (X: 237 Y: 261</span><span>请选择下一点</span></EditorStatus>
    </EditorBody>
  </EditorWindow>
);

const GridDialog = () => {
  const first = useRef(null);
  useEffect(() => {
    first.current.focus();
    first.current.select();
  }, []);
  return (
    <Dialog onSubmit={(e) => e.preventDefault()}>
      <DialogTitle><h2>定义网格</h2><button type="button" aria-label="关闭"><ThinX s={18} /></button></DialogTitle>
      <Group>
        <legend><label htmlFor="hgap"><Sim>水平方向间距(mm)=&gt;间距*个数,间距,间距*个数,间距,...</Sim></label></legend>
        <textarea id="hgap" ref={first} spellCheck="false" defaultValue="4900,4900" />
      </Group>
      <Group>
        <legend><label htmlFor="vgap"><Sim>垂直方向间距(mm)=&gt;间距*个数,间距,间距*个数,间距,...</Sim></label></legend>
        <textarea id="vgap" spellCheck="false" defaultValue="500,200" />
      </Group>
      <DialogButtons><button type="submit">确定</button><button type="button">取消</button></DialogButtons>
    </Dialog>
  );
};

const apps = [
  { n: '任务视图', i: <svg width="20" height="16" fill="none" stroke="#fff"><path d="M5.500 1.500h9v13h-9zM3 3.500H.500v9H3M17 3.500h2.500v9H17" /></svg> },
  { n: '浏览器', i: <svg width="24" height="24" viewBox="0 0 24 24" fill="#f2f2f2"><path d="M11.500 11.500H6Q1 11 2 6.500T7.500 2q5 0 4 9.500zM12.500 11.500Q11 8 12.500 4.500T18 2q4.500 1 4 5-1 4-9.500 4.500zM12.500 12.500H18q5 .5 4 5T16.500 22q-5 0-4-9.500zM11.500 12.500q1.500 3.500 0 7T6 22q-4.500-1-4-5 1-4 9.500-4.500z" /><path d="M8 6q3 1 3.500 5.500M18 8q-1 3-5.500 3.500M16 18q-3-1-3.500-5.500M6 16q1-3 5.500-3.500" stroke="#000c0f" fill="none" /></svg> },
  { n: 'IE', i: <svg width="24" height="24" viewBox="0 0 24 24" fill="none" stroke="#eee"><path d="M19 15.500q-1.500 5-7 5-7-.5-7-8.500t7-8 7.500 8H6" strokeWidth="3.600" /><path d="M3 22q-3-8 13-19.500 6-1 4 4" strokeWidth="1.500" /></svg> },
  { n: '螺旋', i: <svg width="22" height="22" viewBox="0 0 22 22" fill="none" stroke="#ccc" strokeWidth="1.800"><path d="M18 4Q11-1 5 5t-1 12 10 2 4-9-8-2 1 7 3-3M17 3l3-1" /></svg> },
  { n: 'Edge', i: <svg width="22" height="22" viewBox="0 0 22 22" fill="#0c7ad8"><path d="M1 10Q2 1 11 1t10 9v3H8q0 4 5 5 4 0 7-2v4q-4 2-8 2-9-1-9-9 0-5 5-7-6 0-7 4zm7-1h7q0-4-3.500-4T8 9z" /></svg> },
  { n: '文件', i: <svg width="24" height="20" viewBox="0 0 24 20"><path d="M1 2h8l2 2h11v14H1z" fill="#f5cf67" /><path d="M1 6h21v12H1z" fill="#fde49b" /><path d="M5 19v-8h14v8h-4v-4H9v4z" fill="#35a6e6" /></svg> },
  { n: 'Internet Explorer', i: <svg width="26" height="26" viewBox="0 0 24 24" fill="none"><path d="M19 15.500q-1.500 5-7 5-7-.5-7-8.500t7-8 7.500 8H6" stroke="#4db3ee" strokeWidth="4" /><path d="M3 22q-4-8 14-20 5-1 4 4" stroke="#f4c531" strokeWidth="2" /></svg> },
  { n: 'G', run: true, i: <svg width="24" height="26" viewBox="0 0 24 26" fill="none"><path d="M20 3Q9 0 5 8t1 12 11 2 2-9-7 1" stroke="#1ba4ee" strokeWidth="5" /><path d="M15 1l8 1-3 5z" fill="#1ba4ee" /></svg> },
  { n: '360', run: true, i: <svg width="24" height="24" viewBox="0 0 24 24" fill="none"><circle cx="12" cy="12" r="11" fill="#4fb42c" stroke="#d6f0c8" /><path d="M17 15q-1 3-5 3-5-.5-5-6t5-6 5.500 6H8" stroke="#fff" strokeWidth="2.600" /></svg> },
  { n: '广联达', run: true, on: true, i: <Logo s={24} /> },
];

export default function App() {
  return (
    <Page>
      <GlobalStyle />
      <TitleBar>
        <Logo />
        <h1>广联达BIM钢筋算量软件<span> GGJ2013 - [C:\Users\Administrator.PC-20141127NRHM\Desktop\</span>白龙村<span>-2016-08-25-13-27-07(2166</span>版<span>)_16G.GGJ12]</span></h1>
        <WinButtons>
          <button type="button" aria-label="最小化"><I><path d="M3 8.500h10" stroke="#777" /></I></button>
          <button type="button" aria-label="还原"><I><path d="M3.500 5.500h7v7h-7zM5.500 5V3.500h7v7H11" stroke="#777" /></I></button>
          <button type="button" aria-label="关闭"><ThinX s={18} c="#777" /></button>
        </WinButtons>
      </TitleBar>

      <MenuBar>
        <Menus>
          {menus.map((m) => <a key={m} href="#">{m}</a>)}
          <Tool icon={<DocPlus />} label="新建变更" drop />
          <Tool icon={<Mascot />} label="广小二" />
        </Menus>
        <Notice>多边形定义错误</Notice>
        <Account>
          <Tool icon={<User />} label="13907298339" drop wide />
          <span>造价豆:0</span>
          <Bell />
          <More />
        </Account>
      </MenuBar>

      <Toolbars>
        <Segment $w={150}>
          <Tool icon={<NewDoc />} />
          <Tool icon={<OpenFolder arrow />} drop wide />
          <Tool icon={<Save />} />
          <Sep />
          <Tool icon={<Undo />} drop wide />
          <Push><More /></Push>
        </Segment>
        <Segment $w={549}>
          <Tool icon={<Paint />} label="绘图" />
          <Tool icon={<Sigma />} label="汇总计算" />
          <Tool icon={<Cloud />} label="云检查" />
          <Tool icon={<AlignTop />} label="平齐板顶" off />
          <Tool icon={<Binoculars />} label="查找图元" off />
          <Tool icon={<Glasses />} label="查看钢筋量" off />
          <Tool icon={<Batch />} label="批量选择" off />
          <Push><More /></Push>
        </Segment>
        <Segment>
          <ViewSelect><Flat /><select aria-label="视图"><option>二维</option></select><Caret c="#666" /></ViewSelect>
          <Tool icon={<Cube />} label="俯视" off drop wide />
          <Tool icon={<Orbit />} label="动态观察" off />
          <Tool icon={<Local3d />} label="局部三维" off />
          <Sep $tight />
          <Tool icon={<FullScreen />} label="全屏" off />
          <Tool icon={<ZoomIcon />} label="缩放" off drop wide />
          <Tool icon={<Pan />} label="平移" off drop wide />
          <Tool icon={<Rotate />} label="屏幕旋转" off drop />
          <Sep />
          <Tool icon={<Floors />} label="选择楼层" off />
          <Push><More /></Push>
        </Segment>
      </Toolbars>

      <Body>
        <ModuleNav />
        <Work>
          <WorkTools>
            <Tool icon={<NewItem />} label="新建" drop />
            <Tool icon={<Cross />} label="删除" />
            <Tool icon={<Copy />} label="复制" />
            <Tool icon={<Rename />} label="重命名" />
            <Sep $tight />
            <FloorSelect>楼层<span><select><option>第4层</option></select><Caret /></span></FloorSelect>
            <Sep $tight />
            <Tool icon={<Sort />} label="排序" drop />
            <Tool icon={<Funnel />} label="过滤" drop />
            <Sep />
            <Tool icon={<FloorCopy />} label="从其他楼层复制构件" />
            <Tool icon={<FloorCopy />} label="复制构件到其他楼层" />
            <Sep />
            <Tool label="查找" drop />
            <Sep />
            <Tool icon={<ArrowIcon />} label="上移" />
            <Tool icon={<ArrowIcon down off />} label="下移" off />
          </WorkTools>
          <Panes>
            <ComponentList />
            <Properties />
          </Panes>
        </Work>
      </Body>

      <StatusBar>
        <StatusCell $w={148} />
        <StatusCell $w={79}><Sim>层高:2.8m</Sim></StatusCell>
        <StatusCell $w={97}><Sim>底标高:10.27m</Sim></StatusCell>
        <StatusCell $w={48}><Sim>0</Sim></StatusCell>
        <StatusCell>名称在当前层当前构件类型下不允许重名</StatusCell>
        <StatusCell $w={71}><Sim>298.7 FPS</Sim></StatusCell>
      </StatusBar>

      <TaskBar>
        <Start type="button" aria-label="开始">
          <I><path d="M0 2.200l6.800-.9v6.200H0zM7.600 1.200L16 0v7.500H7.600zM0 8.300h6.800v6.300L0 13.700zM7.600 8.300H16V16l-8.400-1.200z" fill="#fff" /></I>
        </Start>
        <TaskSearch>
          <svg width="22" height="22" fill="none"><circle cx="11" cy="11" r="9" stroke="#fff" strokeWidth="2.500" /></svg>
          <input placeholder="在这里输入你要搜索的内容" aria-label="搜索" />
          <I><path d="M5.500 1h5v9h-5zM3.500 7.500v4.500h9V7.500M8 12v3.500M5.500 15.500h5" stroke="#aaa" /></I>
        </TaskSearch>
        <Apps>
          {apps.map((a) => <AppButton key={a.n} type="button" aria-label={a.n} $run={a.run} $on={a.on}>{a.i}</AppButton>)}
        </Apps>
        <TwoLine $w={84}><span>8%</span><span>CPU使用</span></TwoLine>
        <Tray>
          <I><path d="M2 11l6-6 6 6" stroke="#fff" strokeWidth="1.200" /></I>
          <svg width="18" height="16" fill="none" stroke="#fff"><path d="M2.500 1v3M5.500 1v3M1 4.500h6v2L4 8.500 1 6.500zM4 8v3M5.500 11V5.500M8 5.500h8.500v7H5.500M17.500 7.500v3" /><path d="M8 7.500h6.500v3H8z" fill="#fff" /></svg>
          <I><path d="M2 14A12 12 0 0 1 14 2M5 14.500A9 9 0 0 1 14 5.500M8 14.500A6 6 0 0 1 14 8.500" stroke="#bbb" /><path d="M11 14.500a3 3 0 0 1 3-3v3z" fill="#fff" /></I>
          <I><path d="M1 6h2.500L7 3v10l-3.500-3H1zM9 6q1.500 2 0 4M11 4.500q3 3.500 0 7M13 3q4 5 0 10" stroke="#fff" /></I>
          <svg width="24" height="15" fill="none" stroke="#fff"><path d="M.500 1.500h23v12H.500zM6 10.500h12" /><path d="M3 4.500h18M3 7.500h18" strokeDasharray="1.500 1.500" /></svg>
        </Tray>
        <TwoLine $w={90}><span>21:05</span><span>2017/12/3</span></TwoLine>
        <Action type="button" aria-label="通知">
          <svg width="16" height="18"><path d="M0 0h16v13h-6l-4 4v-4H0z" fill="#fff" /><path d="M3 4h10M3 7h10M3 10h6" stroke="#000" /></svg>
          <span>22</span>
        </Action>
      </TaskBar>

      <SectionEditor />
      <GridDialog />

      <Ball>59</Ball>
      <ImeBar>
        <svg width="29" height="28" viewBox="0 0 29 28"><path d="M1 5L24 0l4 22-21 5z" fill="#f0552a" /><path d="M22 7q-9-3-11 1t5 5 3 6-12 1" stroke="#fff" strokeWidth="3.500" fill="none" /></svg>
        <ImeIcons>
          <span>中</span>
          <I><circle cx="4" cy="5" r="2" stroke="#1b72c8" strokeWidth="1.500" /><path d="M11 9q3 0 0 5" stroke="#1b72c8" strokeWidth="2.500" /></I>
          <FaRegSmile /><FaMicrophone /><FaRegKeyboard />
          <I><circle cx="6" cy="4" r="3" fill="#b5bfd2" /><path d="M0 14q0-6 6-6t6 6z" fill="#b5bfd2" /><path d="M8 9h8v6H8z" fill="#8f9bb5" /></I>
          <FaTshirt /><FaWrench />
        </ImeIcons>
      </ImeBar>

      <Marks width="600" height="300" fill="none" stroke="#f00" strokeWidth="7" aria-hidden="true">
        <ellipse cx="109" cy="250" rx="70" ry="22" />
        <ellipse cx="499" cy="208" rx="73" ry="27" />
      </Marks>
    </Page>
  );
}
